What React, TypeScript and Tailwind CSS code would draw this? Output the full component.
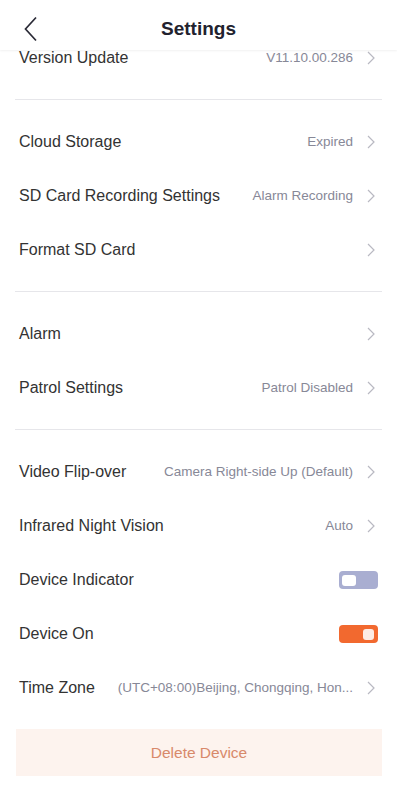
import { ReactNode } from "react";

type Row = {
  label: string;
  value?: string;
  toggle?: "on" | "off";
};

const sections: Row[][] = [
  [
    { label: "Cloud Storage", value: "Expired" },
    { label: "SD Card Recording Settings", value: "Alarm Recording" },
    { label: "Format SD Card" },
  ],
  [
    { label: "Alarm" },
    { label: "Patrol Settings", value: "Patrol Disabled" },
  ],
  [
    { label: "Video Flip-over", value: "Camera Right-side Up (Default)" },
    { label: "Infrared Night Vision", value: "Auto" },
    { label: "Device Indicator", toggle: "off" },
    { label: "Device On", toggle: "on" },
    { label: "Time Zone", value: "(UTC+08:00)Beijing, Chongqing, Hon..." },
  ],
];

function Chevron() {
  return (
    <svg width="8" height="14" viewBox="0 0 8 14" fill="none" className="shrink-0">
      <path d="M1 1l6 6-6 6" stroke="#b9b9c2" strokeWidth="1.2" />
    </svg>
  );
}

function Toggle({ on }: { on: boolean }) {
  return on ? (
    <div className="flex h-[18px] w-[39px] items-center justify-end rounded-[4px] bg-[#f2692f] pr-[4px]">
      <div className="h-[11px] w-[11px] rounded-[3px] bg-[#fdece4]" />
    </div>
  ) : (
    <div className="flex h-[18px] w-[39px] items-center rounded-[4px] bg-[#a9aed1] pl-[3px]">
      <div className="h-[11px] w-[14px] rounded-[3px] bg-white" />
    </div>
  );
}

function SettingRow({ row }: { row: Row }) {
  return (
    <div
      className={
        row.toggle
          ? "flex h-[54px] items-center gap-3 pl-[19px] pr-[19px]"
          : "flex h-[54px] items-center gap-3 pl-[19px] pr-[22px]"
      }
    >
      <span className="shrink-0 text-[16px] text-[#333333]">{row.label}</span>
      <div className="flex min-w-0 flex-1 items-center justify-end gap-[14px]">
        {row.toggle ? (
          <Toggle on={row.toggle === "on"} />
        ) : (
          <>
            {row.value && (
              <span className="truncate text-[13.5px] text-[#878897]">{row.value}</span>
            )}
            <Chevron />
          </>
        )}
      </div>
    </div>
  );
}

function Section({ children, first }: { children: ReactNode; first?: boolean }) {
  return (
    <div className={first ? "pb-[14px]" : "pt-[15px] pb-[14px]"}>{children}</div>
  );
}

function Divider() {
  return <div className="mx-[15px] h-px bg-[#e6e6ea]" />;
}

export default function App() {
  return (
    <div
      className="flex h-[806px] w-full flex-col overflow-hidden bg-white"
      style={{ fontFamily: '"Liberation Sans", Arial, sans-serif' }}
    >
      <header className="relative z-10 flex h-[50px] shrink-0 items-center justify-center bg-white pt-[8px] shadow-[0_1px_2px_rgba(0,0,0,0.06)]">
        <svg
          width="14"
          height="26"
          viewBox="0 0 14 26"
          fill="none"
          className="absolute left-[24px] top-[16px]"
        >
          <path d="M12 1.5L1.5 13 12 24.5" stroke="#2a2a36" strokeWidth="1.7" />
        </svg>
        <h1 className="text-[19px] font-bold text-[#22222e]">Settings</h1>
      </header>

      <div className="flex-1 overflow-hidden">
        <div className="-mt-[19px]">
          <Section first>
            <SettingRow row={{ label: "Version Update", value: "V11.10.00.286" }} />
          </Section>
          {sections.map((rows, i) => (
            <div key={i}>
              <Divider />
              <Section>
                {rows.map((row) => (
                  <SettingRow key={row.label} row={row} />
                ))}
              </Section>
            </div>
          ))}
          <button className="mx-4 flex h-[47px] w-[366px] items-center justify-center bg-[#fdf3ee] text-[15.5px] text-[#d8896a]">
            Delete Device
          </button>
        </div>
      </div>
    </div>
  );
}
